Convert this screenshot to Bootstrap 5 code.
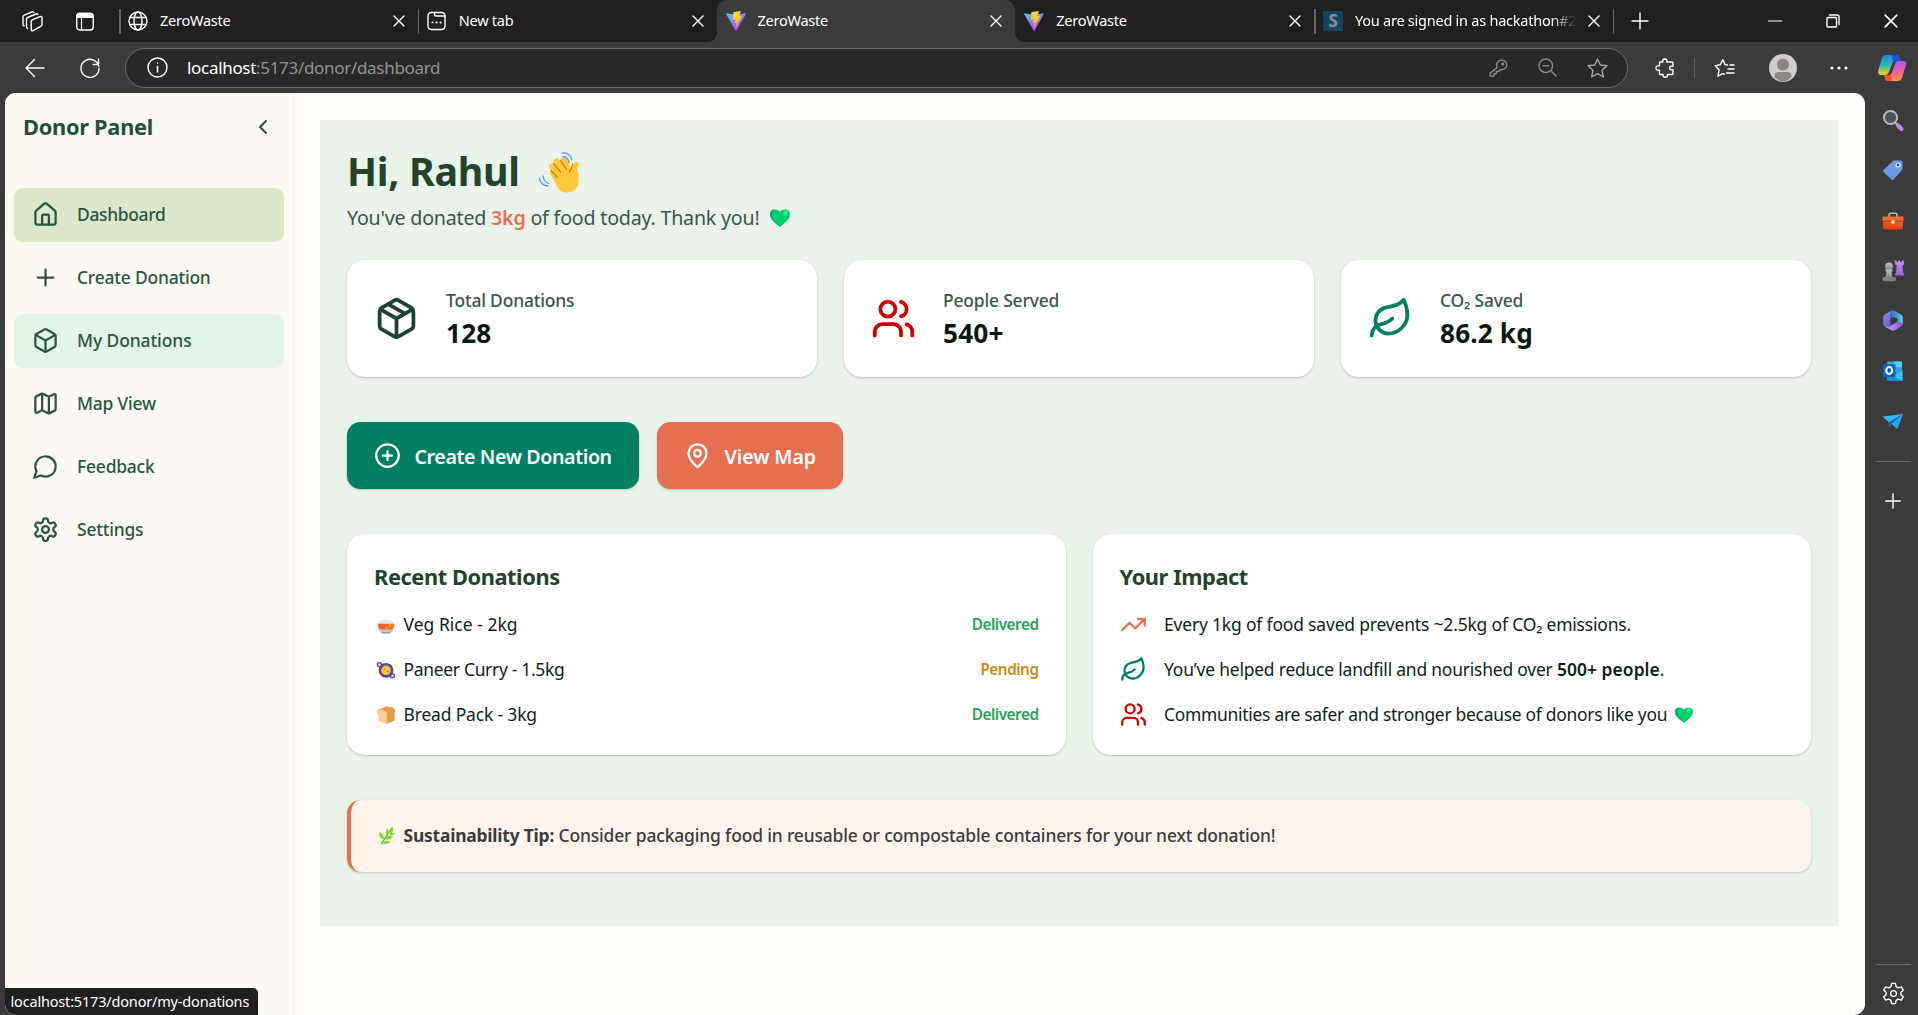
<!DOCTYPE html>
<html lang="en">
<head>
<meta charset="utf-8">
<meta name="viewport" content="width=device-width, initial-scale=1">
<title>ZeroWaste</title>
<link href="https://cdn.jsdelivr.net/npm/bootstrap@5.3.0/dist/css/bootstrap.min.css" rel="stylesheet">
<style>
  body { font-family: "Noto Sans", "Open Sans", sans-serif; background: #3b3b3b; height: 1015px; overflow: hidden; color: #0b1f17; }
  svg { display: block; flex: none; }
  .lu { fill: none; stroke: currentColor; stroke-width: 2; stroke-linecap: round; stroke-linejoin: round; }
  .ln { fill: none; stroke: #fff; stroke-width: 1.4; stroke-linecap: round; stroke-linejoin: round; }

  /* browser chrome */
  .tabstrip { height: 42px; background: #202020; color: #fff; font-size: 14.5px; letter-spacing: -.24px; }
  .strip-start { width: 119px; padding-left: 22px; gap: 33px; }
  .tab { width: 298.75px; height: 42px; padding: 0 13px 0 9px; position: relative; white-space: nowrap; }
  .tab-sep::before { content: ""; position: absolute; left: 0; top: 9px; width: 1.5px; height: 25px; background: #666; }
  .tab-on { background: #3b3b3b; border-radius: 10px 10px 0 0; }
  .tab-on::before, .tab-on::after { content: ""; position: absolute; bottom: 0; width: 9px; height: 9px; }
  .tab-on::before { left: -9px; background: radial-gradient(circle at 0 0, #202020 8.5px, #3b3b3b 9px); }
  .tab-on::after { right: -9px; background: radial-gradient(circle at 100% 0, #202020 8.5px, #3b3b3b 9px); }
  .tab-name { margin-left: 12px; overflow: hidden; }
  .tab-fade { -webkit-mask: linear-gradient(90deg, #000 88%, transparent 100%); mask: linear-gradient(90deg, #000 88%, transparent 100%); width: 222px; }
  .fav-s { width: 20px; height: 20px; background: #164563; color: #8f8f8f; font-weight: 700; font-size: 17px; line-height: 20px; text-align: center; }
  .win-keys { gap: 44px; padding-right: 20px; }

  .toolbar { height: 51px; padding-left: 25px; }
  .omnibox { width: 1502.5px; flex: none; height: 40px; margin-left: 25px; border: 1.5px solid #6b6b6b; border-radius: 20px; background: #292929; font-size: 17px; letter-spacing: -.31px; color: #929292; padding: 0 19px 0 20.5px; }
  .url { margin-left: 19.5px; }
  .omni-keys { gap: 30px; }
  .bar-sep { width: 1.5px; height: 20px; background: #5f5f5f; }

  /* viewport */
  .viewport { width: 1860px; flex: none; margin-left: 5px; height: 922px; background: #fffefa; border-radius: 11px; overflow: hidden; position: relative; }
  .side { width: 288px; background: #fdfaf4; box-shadow: 1px 0 4px rgba(0,0,0,.08); padding: 0 9px; color: #24523b; }
  .side-head { height: 95px; padding: 18px 9px 0 9px; }
  .side-title { font-size: 21.8px; font-weight: 700; letter-spacing: -.28px; line-height: 32px; color: #22503a; }
  .side-link { height: 54px; border-radius: 9px; padding: 0 18px 2px; gap: 18px; margin-bottom: 9px; font-size: 17.46px; font-weight: 500; letter-spacing: -.2px; color: #2a563f; text-decoration: none; }
  .on { background: #dae8c9; letter-spacing: -.33px; }
  .hov { background: #e2f5e7; letter-spacing: -.08px; }

  .board { margin: 27px 27px 0 27px; background: #e9f3ea; padding: 27px 27px 54px; height: 806px; }
  .hello { font-size: 39.3px; font-weight: 700; letter-spacing: -.3px; line-height: 45px; color: #21442a; padding: 2px 0 0; margin: 0 0 8px; gap: 18px; }
  .sub-line { font-size: 19.64px; line-height: 31.5px; letter-spacing: -.2px; color: #3a564a; margin: 0 0 26px; gap: 9px; }
  .coral { color: #e76f51; font-weight: 600; }
  .panel { background: #fff; border-radius: 18px; padding: 27px; box-shadow: 0 1px 3px rgba(0,0,0,.1), 0 1px 2px rgba(0,0,0,.1); }
  .g27 { gap: 27px; }
  .stat-name { font-size: 17.46px; font-weight: 500; line-height: 27px; letter-spacing: -.17px; color: #3a564a; height: 27px; }
  .stat-num { font-size: 26.2px; font-weight: 700; line-height: 38px; height: 36px; letter-spacing: .15px; color: #06190f; }
  .act { height: 67px; border-radius: 13.5px; border: 0; color: #fff; font-size: 19.64px; font-weight: 600; padding: 0 27px; gap: 13.5px; letter-spacing: -.4px; box-shadow: 0 1px 3px rgba(0,0,0,.1), 0 1px 2px rgba(0,0,0,.1); }
  .act span { padding-top: 3px; }
  .act-green { background: #008060; width: 292px; }
  .act-coral { background: #e76f51; width: 186px; letter-spacing: -.12px; }
  .mt45 { margin-top: 45px; }
  .panel-title { font-size: 21.8px; font-weight: 700; letter-spacing: -.42px; line-height: 31.5px; margin: 0 0 19px; color: #21442a; }
  .line-item { font-size: 17.46px; line-height: 27px; height: 27px; letter-spacing: -.2px; color: #0b1f17; white-space: nowrap; }
  .line-item + .line-item { margin-top: 18px; }
  .em { margin-right: 5.5px; }
  .dish { letter-spacing: .05px; }
  .dish-mid { letter-spacing: -.15px; }
  .dish-long { letter-spacing: -.3px; }
  .ico { margin-right: 17.5px; }
  .state { font-size: 15.3px; font-weight: 600; letter-spacing: -.47px; }
  .t-ok { color: #22a355; }
  .t-wait { color: #ca8a14; }
  .green { color: #008060; }
  .red { color: #d00000; }
  .tip { height: 72px; background: #fff4ec; border-left: 4.5px solid #e76f51; border-radius: 13.5px; padding: 0 0 1px 23.5px; font-size: 17.46px; letter-spacing: -.15px; font-weight: 500; color: #3b3b3b; box-shadow: 0 1px 3px rgba(0,0,0,.1), 0 1px 2px rgba(0,0,0,.1); }
  .tip strong { letter-spacing: -.21px; }
  .status { position: absolute; left: -1px; bottom: 0; height: 27px; width: 254px; background: #202020; color: #fff; border-radius: 0 5px 0 9px; font-size: 14.5px; letter-spacing: -.18px; line-height: 26px; padding-left: 6.5px; white-space: nowrap; }

  .rail { width: 53px; flex: none; padding: 15px 0 0 3px; }
  .rail-app { width: 24px; height: 24px; margin-bottom: 26.3px; }
  .rail-sep { width: 35px; height: 1px; background: #6a6a6a; }
</style>
<script src="https://cdn.jsdelivr.net/npm/bootstrap@5.3.0/dist/js/bootstrap.bundle.min.js"></script>
</head>
<body class="d-flex flex-column">

<svg width="0" height="0" class="position-absolute">
  <defs>
    <linearGradient id="va" x1="0" y1="0" x2=".6" y2="1"><stop offset="0" stop-color="#41d1ff"/><stop offset="1" stop-color="#bd34fe"/></linearGradient>
    <linearGradient id="vb" x1=".4" y1="0" x2=".6" y2="1"><stop offset="0" stop-color="#ffea83"/><stop offset=".1" stop-color="#ffdd35"/><stop offset="1" stop-color="#ffa800"/></linearGradient>
    <linearGradient id="ca" x1="0" y1="0" x2="0" y2="1"><stop offset="0" stop-color="#1a8ff0"/><stop offset=".5" stop-color="#2bb8b0"/><stop offset="1" stop-color="#f4d020"/></linearGradient>
    <linearGradient id="cb" x1="0" y1="0" x2="0" y2="1"><stop offset="0" stop-color="#a35cf5"/><stop offset=".5" stop-color="#f0589a"/><stop offset="1" stop-color="#fd9a4e"/></linearGradient>
    <linearGradient id="ma" x1="0" y1="0" x2="1" y2="1"><stop offset="0" stop-color="#a58cf0"/><stop offset="1" stop-color="#3b4fb8"/></linearGradient>
    <linearGradient id="mc" x1="0" y1="0" x2="1" y2="0"><stop offset="0" stop-color="#2f5fc4"/><stop offset="1" stop-color="#5cd0f5"/></linearGradient>
    <linearGradient id="mb" x1="0" y1="0" x2="1" y2="0"><stop offset="0" stop-color="#d49bf2"/><stop offset="1" stop-color="#7f62d8"/></linearGradient>
    <linearGradient id="rk" x1="0" y1="0" x2="0" y2="1"><stop offset="0" stop-color="#c98ef8"/><stop offset="1" stop-color="#9660d6"/></linearGradient>
    <linearGradient id="pw" x1="0" y1="0" x2="0" y2="1"><stop offset="0" stop-color="#c5c5c5"/><stop offset="1" stop-color="#858585"/></linearGradient>
    <linearGradient id="tb" x1="0" y1="0" x2="0" y2="1"><stop offset="0" stop-color="#f7742a"/><stop offset="1" stop-color="#dc3d0c"/></linearGradient>
    <symbol id="vite" viewBox="0 0 256 257"><path fill="url(#va)" d="M255.153 37.938 134.897 252.976c-2.483 4.44-8.862 4.466-11.382.048L.875 37.958c-2.746-4.814 1.371-10.646 6.827-9.67l120.385 21.517a6.537 6.537 0 0 0 2.322-.004l117.867-21.483c5.438-.991 9.574 4.796 6.877 9.62Z"/><path fill="url(#vb)" d="M185.432.063 96.44 17.501a3.268 3.268 0 0 0-2.634 3.014l-5.474 92.456a3.268 3.268 0 0 0 3.997 3.378l24.777-5.718c2.318-.535 4.413 1.507 3.936 3.838l-7.361 36.047c-.495 2.426 1.782 4.5 4.151 3.78l15.304-4.649c2.372-.72 4.652 1.36 4.15 3.788l-11.698 56.621c-.732 3.542 3.979 5.473 5.943 2.437l1.313-2.028 72.516-144.72c1.215-2.423-.88-5.186-3.54-4.672l-25.505 4.922c-2.396.462-4.435-1.77-3.759-4.114l16.646-57.705c.677-2.35-1.37-4.583-3.769-4.113Z"/></symbol>
    <symbol id="x" viewBox="0 0 12 12"><path d="M1 1l10 10M11 1 1 11" fill="none" stroke="#fff" stroke-width="1.4" stroke-linecap="round"/></symbol>
    <symbol id="heart" viewBox="0 0 22 20"><path d="M11 19C7 15.500 1 11.500 1 6.500 1 1 8 0 11 4c3-4 10-3 10 2.500C21 11.500 15 15.500 11 19z" fill="#00cf6c"/><path d="M11 19C7 15.500 1 11.500 1 6.500 1 4 2.500 2 4.500 1.600 1.500 6 4 12 11 19z" fill="#06a77f"/><ellipse cx="16.500" cy="5" rx="2" ry="2.600" fill="#35f09c" transform="rotate(30 16.500 5)"/></symbol>
    <symbol id="leaf" viewBox="0 0 24 24"><path d="M11 20A7 7 0 0 1 9.800 6.100C15.500 5 17 4.480 19 2c1 2 2 4.180 2 8 0 5.500-4.780 10-10 10Z"/><path d="M2 21c0-3 1.850-5.360 5.080-6C9.500 14.520 12 13 13 12"/></symbol>
    <symbol id="users" viewBox="0 0 24 24"><path d="M16 21v-2a4 4 0 0 0-4-4H6a4 4 0 0 0-4 4v2"/><circle cx="9" cy="7" r="4"/><path d="M22 21v-2a4 4 0 0 0-3-3.870M16 3.130a4 4 0 0 1 0 7.750"/></symbol>
  </defs>
</svg>

<header>
  <div class="tabstrip d-flex align-items-center">
    <div class="strip-start d-flex align-items-center">
      <svg width="21" height="21" viewBox="0 0 21 21" class="ln"><path d="M9.700 9.200 18 5.600q2-.6 2 1.200v6.500q0 1.500-1.300 2.100l-7.700 4.200q-1.800.8-1.800-1V10.500q0-.9.500-1.300z"/><path d="M5.500 17.500Q4.500 17 4.500 15.500V8.300q0-1.300 1.200-1.800L14 3q1.400-.5 1.800.5"/><path d="M2 15Q1 14.500 1 13V6q0-1.300 1.200-1.800L10 1q1.200-.4 1.800.4"/></svg>
      <svg width="18" height="19" viewBox="0 0 18 19"><rect x=".75" y="1.500" width="16.500" height="16.500" rx="3" fill="none" stroke="#fff" stroke-width="1.400"/><path d="M.5 6V3.500Q.5.8 3.200.8h11.600q2.700 0 2.700 2.700V6z" fill="#fff"/><path d="M5.500 6v12" stroke="#fff" stroke-width="1.200"/></svg>
    </div>
    <div class="tab tab-sep d-flex align-items-center">
      <svg width="20" height="20" viewBox="0 0 20 20" class="ln"><circle cx="10" cy="10" r="9"/><ellipse cx="10" cy="10" rx="4" ry="9"/><path d="M2 6.500h16M2 13.500h16"/></svg>
      <span class="tab-name flex-grow-1">ZeroWaste</span><svg width="12" height="12"><use href="#x"/></svg>
    </div>
    <div class="tab tab-sep d-flex align-items-center">
      <svg width="20" height="20" viewBox="0 0 20 20" class="ln"><rect x="1" y="1.500" width="17" height="17" rx="3.500"/><path d="M7.500 1.500v2q0 1.500 1.500 1.500h9"/><path d="M5.500 11.500h.1M9.500 11.500h.1M13.500 11.500h.1" stroke-width="2"/></svg>
      <span class="tab-name flex-grow-1">New tab</span><svg width="12" height="12"><use href="#x"/></svg>
    </div>
    <div class="tab tab-on d-flex align-items-center">
      <svg width="20" height="20"><use href="#vite"/></svg>
      <span class="tab-name flex-grow-1">ZeroWaste</span><svg width="12" height="12"><use href="#x"/></svg>
    </div>
    <div class="tab d-flex align-items-center">
      <svg width="20" height="20"><use href="#vite"/></svg>
      <span class="tab-name flex-grow-1">ZeroWaste</span><svg width="12" height="12"><use href="#x"/></svg>
    </div>
    <div class="tab tab-sep d-flex align-items-center">
      <span class="fav-s">S</span>
      <span class="tab-name tab-fade">You are signed in as hackathon#2</span><svg width="12" height="12" class="ms-auto"><use href="#x"/></svg>
    </div>
    <div class="tab tab-sep d-flex align-items-center flex-shrink-1" style="width:60px">
      <svg width="18" height="18" viewBox="0 0 18 18" class="ln" style="margin-left:9.500px"><path d="M9 1v16M1 9h16"/></svg>
    </div>
    <div class="win-keys d-flex align-items-center ms-auto">
      <svg width="14" height="14" viewBox="0 0 14 14" class="ln"><path d="M.5 7h13" stroke-width="1.200"/></svg>
      <svg width="14" height="14" viewBox="0 0 14 14" class="ln"><rect x="1" y="3.500" width="9.500" height="9.500" rx="1"/><path d="M3.500 1h7.500q2 0 2 2v7.500"/></svg>
      <svg width="14" height="14"><use href="#x"/></svg>
    </div>
  </div>

  <div class="toolbar d-flex align-items-center">
    <svg width="20" height="20" viewBox="0 0 20 20" class="ln"><path d="M19 10H1M9.500 1.500 1 10l8.500 8.500"/></svg>
    <svg width="20" height="20" viewBox="0 0 20 20" class="ln" style="margin-left:35px"><path d="M18.800 8.500A9 9 0 1 0 19 10.500M18.500 1v5.500H13"/></svg>
    <div class="omnibox d-flex align-items-center">
      <svg width="21" height="21" viewBox="0 0 21 21" class="ln"><circle cx="10.500" cy="10.500" r="9.500"/><path d="M10.500 9.500v5.500M10.500 6v.1" stroke-width="1.600"/></svg>
      <span class="url"><span class="text-white">localhost</span>:5173/donor/dashboard</span>
      <div class="omni-keys d-flex align-items-center ms-auto">
        <svg width="19" height="18" viewBox="0 0 19 18" class="ln" style="stroke:#8c8c8c"><path d="M8 8.700Q6.500 4.500 9.500 2.200 12.500 0 16 2.200q3 3 1 6.200-2.200 3-5.800 2.200L9.500 12.500H7.300v2.300H5v2.300H1.200v-3z"/><circle cx="13.800" cy="5" r=".8"/></svg>
        <svg width="19" height="19" viewBox="0 0 19 19" class="ln" style="stroke:#8c8c8c"><circle cx="7.800" cy="7.800" r="6.800"/><path d="M5 7.800h5.600M12.800 12.800 18 18"/></svg>
        <svg width="21" height="20" viewBox="0 0 21 20" class="ln" style="stroke:#a5a5a5"><path d="m10.500 1 2.800 6 6.700.8-5 4.500 1.400 6.700-5.900-3.300L4.600 19 6 12.300l-5-4.500L7.700 7z"/></svg>
      </div>
    </div>
    <svg width="20" height="20" viewBox="0 0 20 20" class="ln" style="margin-left:27px"><path d="M4.500 4h3.300q-.5-3 2-3t2 3H17q1 0 1 1v3.300q-3.400-.8-3.400 1.700t3.400 1.700V15.500q0 1-1 1h-4.500q.3 2.700-2.200 2.700t-2.200-2.700H5.500q-1 0-1-1V12.300Q1 12.500 1 10t3.500-2.200z"/></svg>
    <div class="bar-sep" style="margin-left:19px"></div>
    <svg width="21" height="20" viewBox="0 0 21 20" class="ln" style="margin-left:19px"><path d="M13.500 7 11 6.600 8.800 1.500 6.300 6.800 1 7.600l4 4.200-1 6.400 4.800-2.700 1.500.8M14 11h6M12.500 15h7.500M16 7h4"/></svg>
    <svg width="28" height="28" viewBox="0 0 28 28" style="margin-left:33.500px"><circle cx="14" cy="14" r="14" fill="#d0cdca"/><circle cx="14" cy="10.500" r="6" fill="#8b8683"/><path d="M5.500 23Q5 18 10 18h8q5 0 4.500 5-8.500 9-17 0z" fill="#8b8683"/></svg>
    <svg width="18" height="4" viewBox="0 0 18 4" style="margin-left:33.500px"><circle cx="2" cy="2" r="1.600" fill="#fff"/><circle cx="9" cy="2" r="1.600" fill="#fff"/><circle cx="16" cy="2" r="1.600" fill="#fff"/></svg>
    <svg width="28" height="26" viewBox="0 0 28 26" style="margin-left:30px"><path d="M9 0h9q2.500 0 3.300 3l.7 3h-5q-2 0-2.700 2.500L11 17q-1 3-4 3H3q-4 0-2.700-5L4 3Q5 0 9 0z" fill="url(#ca)"/><path d="M14 0h4q2.500 0 3.300 3l.7 3h-5q-1.500 0-2 1z" fill="#1b4fd8"/><path d="M19 26h-9q-2.300 0-3-3l-.8-3H11q2 0 2.800-2.500L17 9q1-3 4-3h4q4 0 2.700 5L24 23q-1 3-5 3z" fill="url(#cb)"/><path d="M14 26h-4q-2.300 0-3-3l-.8-3H11q1.500 0 2.200-1z" fill="#f9532e"/></svg>
  </div>
</header>

<div class="d-flex">
  <div class="viewport d-flex">
    <aside class="side flex-shrink-0">
      <div class="side-head d-flex justify-content-between align-items-start">
        <span class="side-title">Donor Panel</span>
        <svg class="lu" width="24" height="24" viewBox="0 0 24 24" style="margin-top:3.500px"><path d="m15 18-6-6 6-6"/></svg>
      </div>
      <nav class="d-flex flex-column">
        <a class="side-link on d-flex align-items-center"><svg class="lu" width="27" height="27" viewBox="0 0 24 24"><path d="M15 21v-8a1 1 0 0 0-1-1h-4a1 1 0 0 0-1 1v8"/><path d="M3 10a2 2 0 0 1 .709-1.528l7-5.999a2 2 0 0 1 2.582 0l7 5.999A2 2 0 0 1 21 10v9a2 2 0 0 1-2 2H5a2 2 0 0 1-2-2z"/></svg>Dashboard</a>
        <a class="side-link d-flex align-items-center"><svg class="lu" width="27" height="27" viewBox="0 0 24 24"><path d="M5 12h14M12 5v14"/></svg>Create Donation</a>
        <a class="side-link hov d-flex align-items-center"><svg class="lu" width="27" height="27" viewBox="0 0 24 24"><path d="M21 8a2 2 0 0 0-1-1.730l-7-4a2 2 0 0 0-2 0l-7 4A2 2 0 0 0 3 8v8a2 2 0 0 0 1 1.730l7 4a2 2 0 0 0 2 0l7-4A2 2 0 0 0 21 16Z"/><path d="m3.300 7 8.700 5 8.700-5M12 22V12"/></svg>My Donations</a>
        <a class="side-link d-flex align-items-center"><svg class="lu" width="27" height="27" viewBox="0 0 24 24"><path d="M14.106 5.553a2 2 0 0 0 1.788 0l3.659-1.830A1 1 0 0 1 21 4.619v12.764a1 1 0 0 1-.553.894l-4.553 2.277a2 2 0 0 1-1.788 0l-4.212-2.106a2 2 0 0 0-1.788 0l-3.659 1.830A1 1 0 0 1 3 19.381V6.618a1 1 0 0 1 .553-.894l4.553-2.277a2 2 0 0 1 1.788 0zM15 5.764v15M9 3.236v15"/></svg>Map View</a>
        <a class="side-link d-flex align-items-center"><svg class="lu" width="27" height="27" viewBox="0 0 24 24"><path d="M7.900 20A9 9 0 1 0 4 16.100L2 22Z"/></svg>Feedback</a>
        <a class="side-link d-flex align-items-center"><svg class="lu" width="27" height="27" viewBox="0 0 24 24"><path d="M12.220 2h-.44a2 2 0 0 0-2 2v.18a2 2 0 0 1-1 1.730l-.43.25a2 2 0 0 1-2 0l-.15-.08a2 2 0 0 0-2.730.73l-.22.38a2 2 0 0 0 .73 2.730l.15.1a2 2 0 0 1 1 1.720v.51a2 2 0 0 1-1 1.740l-.15.09a2 2 0 0 0-.73 2.730l.22.38a2 2 0 0 0 2.730.73l.15-.08a2 2 0 0 1 2 0l.43.25a2 2 0 0 1 1 1.730V20a2 2 0 0 0 2 2h.44a2 2 0 0 0 2-2v-.18a2 2 0 0 1 1-1.730l.43-.25a2 2 0 0 1 2 0l.15.08a2 2 0 0 0 2.730-.73l.22-.39a2 2 0 0 0-.73-2.730l-.15-.08a2 2 0 0 1-1-1.740v-.5a2 2 0 0 1 1-1.740l.15-.09a2 2 0 0 0 .73-2.730l-.22-.38a2 2 0 0 0-2.730-.73l-.15.08a2 2 0 0 1-2 0l-.43-.25a2 2 0 0 1-1-1.730V4a2 2 0 0 0-2-2z"/><circle cx="12" cy="12" r="3"/></svg>Settings</a>
      </nav>
    </aside>

    <main class="flex-grow-1">
      <section class="board">
        <h1 class="hello d-flex align-items-center"><span>Hi, Rahul</span>
          <svg width="42" height="42" viewBox="0 0 42 42"><g stroke="#ffc83d" stroke-linecap="round" fill="none"><path d="M15 22l10 10" stroke-width="6"/><path d="M14 15.500l12 13" stroke-width="6"/><path d="M18.500 10.500 29 24" stroke-width="6"/><path d="M25.500 9.500 32 21" stroke-width="6"/><path d="M38 13.500q-2.500 5-1.500 12" stroke-width="5.500"/></g><path d="M13 23 27 13l8 6q5.500-1 5.500 4.500v8.500q-2 9-11 9.500-5 .5-9-3z" fill="#ffc83d"/><g stroke="#d67d00" stroke-width="1.300" fill="none" stroke-linecap="round"><path d="M13 19.500l6 6.500M15.500 12.500l7 8.500M22.500 9.500l6 9M34.500 13q-.5 4.500-3.500 8.500"/></g><g stroke="#5092ff" stroke-width="1.300" fill="none" stroke-linecap="round"><path d="M1.500 27q.5 7 8.500 8M5 25q1 6 6 7.500M24 2.200q7-1.500 10 6.300M25 5.500q4.500.5 6 6"/></g></svg>
        </h1>
        <p class="sub-line d-flex align-items-center"><span>You've donated <span class="coral">3kg</span> of food today. Thank you!</span><svg width="22" height="20"><use href="#heart"/></svg></p>

        <div class="d-flex g27">
          <div class="panel d-flex align-items-center g27" style="flex:1"><svg class="lu" style="color:#1b4332" width="45" height="45" viewBox="0 0 24 24"><path d="M11 21.730a2 2 0 0 0 2 0l7-4A2 2 0 0 0 21 16V8a2 2 0 0 0-1-1.730l-7-4a2 2 0 0 0-2 0l-7 4A2 2 0 0 0 3 8v8a2 2 0 0 0 1 1.730zM12 22V12M3.290 7 12 12l8.710-5M7.500 4.270l9 5.150"/></svg><div><div class="stat-name">Total Donations</div><div class="stat-num">128</div></div></div>
          <div class="panel d-flex align-items-center g27" style="flex:1"><svg class="lu red" width="45" height="45"><use href="#users"/></svg><div><div class="stat-name">People Served</div><div class="stat-num">540+</div></div></div>
          <div class="panel d-flex align-items-center g27" style="flex:1"><svg class="lu green" width="45" height="45"><use href="#leaf"/></svg><div><div class="stat-name">CO₂ Saved</div><div class="stat-num">86.2 kg</div></div></div>
        </div>

        <div class="d-flex mt45" style="gap:18px">
          <button class="act act-green btn d-flex align-items-center"><svg class="lu" width="27" height="27" viewBox="0 0 24 24"><circle cx="12" cy="12" r="10"/><path d="M8 12h8M12 8v8"/></svg><span class="text-nowrap">Create New Donation</span></button>
          <button class="act act-coral btn d-flex align-items-center"><svg class="lu" width="27" height="27" viewBox="0 0 24 24"><path d="M20 10c0 4.993-5.539 10.193-7.399 11.799a1 1 0 0 1-1.202 0C9.539 20.193 4 14.993 4 10a8 8 0 0 1 16 0"/><circle cx="12" cy="10" r="3"/></svg><span class="text-nowrap">View Map</span></button>
        </div>

        <div class="d-flex g27 mt45">
          <div class="panel" style="flex:1">
            <h2 class="panel-title">Recent Donations</h2>
            <div class="line-item d-flex align-items-center">
              <svg width="24" height="20" viewBox="0 0 24 20" class="em"><path d="M4 9q0-4.500 8-4.500T20 9z" fill="#e6e6e6"/><path d="M3.500 9h17q0 7.500-5 9.500h-7q-5-2-5-9.500z" fill="#c9c9c9"/><path d="M4 8.700h16q.3 4.300-2.500 5.800H7Q3.700 13 4 8.700z" fill="#f4662a"/><circle cx="16" cy="10.500" r="1.500" fill="#ffb02e"/><circle cx="13" cy="12.500" r="1" fill="#ffb02e"/><path d="M7.500 17h9l-1 1.500h-7z" fill="#999"/></svg>
              <span class="dish">Veg Rice - 2kg</span><span class="state t-ok ms-auto">Delivered</span></div>
            <div class="line-item d-flex align-items-center">
              <svg width="24" height="20" viewBox="0 0 24 20" class="em"><g fill="none" stroke="#5b4d94" stroke-width="1.500"><circle cx="5.500" cy="4.800" r="2"/><circle cx="18.500" cy="15.800" r="2"/></g><circle cx="12" cy="10.300" r="7.400" fill="#5b478e"/><circle cx="12" cy="10.300" r="4.800" fill="#f2c732"/><circle cx="10.500" cy="9.500" r=".8" fill="#a87718"/><circle cx="13.500" cy="11.500" r=".8" fill="#a87718"/></svg>
              <span class="dish-long">Paneer Curry - 1.5kg</span><span class="state t-wait ms-auto">Pending</span></div>
            <div class="line-item d-flex align-items-center">
              <svg width="24" height="20" viewBox="0 0 24 20" class="em"><path d="M3 5.500 12 1.300l6.500 1.200Q22 4 20.700 7.500V15.500L12.500 19z" fill="#e59a48"/><path d="M3 5.500Q7 3.500 11 6q3.500 2 1.700 5V19L4.500 15.500V11Q2 8 3 5.500z" fill="#f9cf95"/></svg>
              <span class="dish-mid">Bread Pack - 3kg</span><span class="state t-ok ms-auto">Delivered</span></div>
          </div>
          <div class="panel" style="flex:1">
            <h2 class="panel-title">Your Impact</h2>
            <div class="line-item d-flex align-items-center"><svg class="lu ico" style="color:#e76f51" width="27" height="27" viewBox="0 0 24 24"><path d="M22 7l-8.500 8.500-5-5L2 17M16 7h6v6"/></svg><span style="letter-spacing:-.16px">Every 1kg of food saved prevents ~2.5kg of CO₂ emissions.</span></div>
            <div class="line-item d-flex align-items-center"><svg class="lu green ico" width="27" height="27"><use href="#leaf"/></svg><span>You’ve helped reduce landfill and nourished over <span class="fw-semibold" style="letter-spacing:.05px">500+ people</span>.</span></div>
            <div class="line-item d-flex align-items-center"><svg class="lu red ico" width="27" height="27"><use href="#users"/></svg><span style="letter-spacing:-.28px">Communities are safer and stronger because of donors like you</span><svg width="20" height="18" style="margin-left:7px"><use href="#heart"/></svg></div>
          </div>
        </div>

        <div class="tip mt45 d-flex align-items-center">
          <svg width="24" height="20" viewBox="0 0 24 20" style="margin-right:5px"><path d="M6 18.500Q8 15 17 2" stroke="#5da336" stroke-width="1.300" fill="none"/><path d="M9 13.500Q16 14 18.500 10.500q-6-2.500-9.500 3zM6.500 17q6 2.500 9-1-4.500-3.500-9 1zM11.500 9.500Q10 5 12 2.500q3.500 3 .8 6zM8.300 13.500Q2.500 11 4.500 6q4 1.500 4.500 6zM14.500 6.500Q14 3 17.500.5q1.500 4-1 6.500 2.500-.5 4 0-2.500 3-5.500 2z" fill="#86d72f"/></svg>
          <span class="text-nowrap"><strong>Sustainability Tip:</strong> Consider packaging food in reusable or compostable containers for your next donation!</span>
        </div>
      </section>
    </main>
    <div class="status">localhost:5173/donor/my-donations</div>
  </div>

  <aside class="rail d-flex flex-column align-items-center">
    <svg class="rail-app" viewBox="0 0 24 24"><circle cx="9.500" cy="9.500" r="6.600" fill="#4d5357" stroke="#b9b9b9" stroke-width="2"/><path d="M14.500 15l2 2" stroke="#b9b9b9" stroke-width="2"/><path d="M17 17.500l3.500 3.500" stroke="#bb86f4" stroke-width="4.200" stroke-linecap="round"/></svg>
    <svg class="rail-app" viewBox="0 0 24 24"><path d="M12.500 2.500h7q2 0 2 2v7L12.500 21.500q-1 1-2 0l-8-7.500q-1-1 0-2z" fill="#6a9bea"/><circle cx="17" cy="7" r="2.600" fill="#dfe9fb"/><circle cx="17" cy="7" r="1.300" fill="#243c68"/></svg>
    <svg class="rail-app" viewBox="0 0 24 24"><path d="M8 8V6q0-1.800 1.800-1.800h4.400Q16 4.200 16 6v2" fill="none" stroke="#bdbdbd" stroke-width="1.500"/><rect x="2" y="8" width="20" height="12.500" rx="1.500" fill="url(#tb)"/><path d="M1.500 7.500h21v4.500h-21z" fill="#f26a24"/><rect x="1.500" y="11.600" width="21" height="1" fill="#b93005"/><circle cx="12" cy="13" r="2" fill="#cfcfcf"/></svg>
    <svg class="rail-app" viewBox="0 0 24 24"><circle cx="8" cy="7.500" r="3.900" fill="url(#pw)"/><path d="M4.500 10.500h7v1.900h-1q0 3.500 1.500 6H4q1.500-2.500 1.500-6h-1z" fill="url(#pw)"/><rect x="1.500" y="18" width="13.500" height="4.200" rx="2" fill="#848484"/><path d="M13.500 1.500h2v1.500h1.800V1.500h2V3h1.700V1.500h1.800V6h-1.300l.6 8h1v2.500h-9V14h1l.6-8h-1.200z" fill="url(#rk)"/></svg>
    <svg class="rail-app" viewBox="0 0 24 24"><path d="M2.200 8.500Q2.200 6.500 4 5.300L10.500 1.500 15 4.500Q9.500 7 9.500 10v6.500L6 19l-2.500-1.500Q2.200 16.500 2.200 15z" fill="url(#ma)"/><path d="M9.500 2.200q2.500-1.600 5 0l5.500 3.200q1.800 1.200 1.800 3.200v7.200L16.500 12.700V9.500Q12 7.500 9 8z" fill="url(#mc)"/><path d="M21.800 14.500q0 2-1.700 3l-5.800 3.500q-2.300 1.400-4.600 0l-5.500-3.300q3 .5 5-.8l7.300-4.200z" fill="url(#mb)"/></svg>
    <svg class="rail-app" viewBox="0 0 24 24"><rect x="6" y="2.500" width="15" height="15" rx="1" fill="#2aa4e4"/><rect x="13" y="2.500" width="8" height="5.500" fill="#4fd2f7"/><path d="M6 17v4q0 1 1 1h13.500q1 0 1-1v-9L13 17z" fill="#1a8bd8"/><path d="M12 17l9.500 5V11.500z" fill="#38c2f1"/><rect x="2" y="5" width="12.500" height="13" rx="1.200" fill="#0a66bd"/><ellipse cx="8.200" cy="11.500" rx="3" ry="3.400" fill="none" stroke="#fff" stroke-width="2"/></svg>
    <svg class="rail-app" viewBox="0 0 24 24"><path d="M1.500 6.500 22 4l-6 15-5.500-5.500L22 4 8 12.500z" fill="#35b8f0"/><path d="M8 12.300 22 4 10.500 14 8 18z" fill="#0d69b8"/><path d="M10.500 14 22 4l-5.500 14.500z" fill="#25a3e6"/></svg>
    <div class="rail-sep" style="margin-top:1px"></div>
    <svg width="16" height="16" viewBox="0 0 16 16" class="ln" style="margin-top:31px"><path d="M8 .7v14.600M.7 8h14.600"/></svg>
    <div class="rail-sep" style="margin-top:455px"></div>
    <svg width="23" height="23" viewBox="0 0 24 24" class="ln" style="margin-top:17px"><path d="M10 1.500h4l.7 3.300 2.300 1.300 3.200-1 2 3.400-2.500 2.300v2.400l2.500 2.300-2 3.400-3.200-1-2.300 1.300-.7 3.300h-4l-.7-3.300-2.300-1.300-3.200 1-2-3.400 2.500-2.300v-2.400L1.800 8.500l2-3.400 3.200 1 2.300-1.300z"/><circle cx="12" cy="12" r="3"/></svg>
  </aside>
</div>
</body>
</html>
